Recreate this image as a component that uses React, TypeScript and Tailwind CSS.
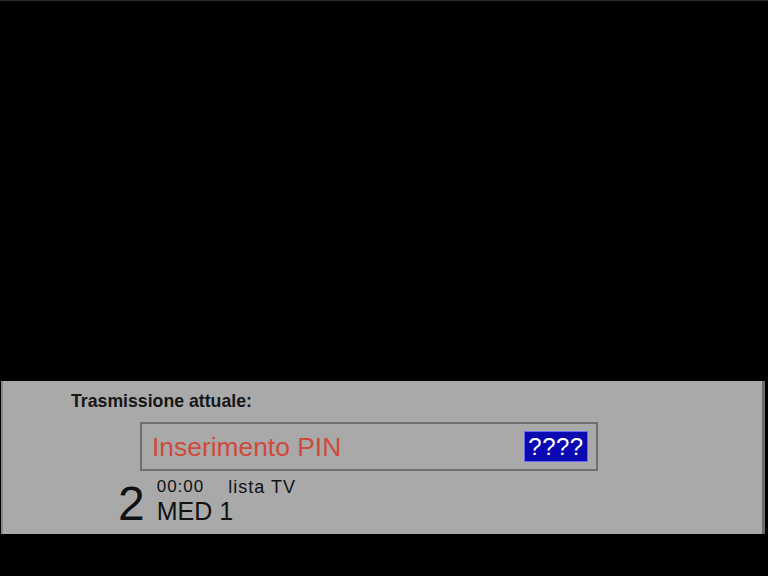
export default function App() {
  return (
    <div className="w-[768px] h-[576px] bg-black flex flex-col overflow-hidden" style={{ fontFamily: '"Liberation Sans", Arial, sans-serif' }}>
      <div className="h-[381px] shrink-0 border-t border-[#2a2a2a]" />
      <div className="ml-[1px] w-[764px] h-[153px] shrink-0 bg-[#a9a9a9] border-l-[2px] border-r-[3px] border-l-[#8a8a8a] border-r-[#6c6c6c] flex flex-col">
        <div className="pl-[68px] pt-[10px] h-[41px] text-[17.7px] leading-[20px] font-bold text-[#161616]">
          Trasmissione attuale:
        </div>
        <div className="ml-[137px] w-[458px] h-[49px] border-2 border-[#707070] flex items-center justify-between pl-[10px] pr-[8px]">
          <span className="text-[26.4px] leading-[30px] text-[#cf4a3a]">Inserimento PIN</span>
          <span className="w-[64px] h-[31px] bg-[#0a0ab0] border border-[#6a6aff] text-white text-[24px] leading-[29px] text-center tracking-[0.5px]">????</span>
        </div>
        <div className="ml-[115px] mt-[7px] flex items-end">
          <span className="text-[48px] leading-[40px] text-[#111]">2</span>
          <div className="ml-[12px] flex flex-col">
            <div className="flex text-[17px] leading-[18px] text-[#111] tracking-[1px]">
              <span>00:00</span>
              <span className="ml-[24px] text-[18px]">lista TV</span>
            </div>
            <span className="text-[25px] leading-[26px] text-[#111] mt-[2px]">MED 1</span>
          </div>
        </div>
      </div>
      <div className="flex-1" />
    </div>
  );
}
